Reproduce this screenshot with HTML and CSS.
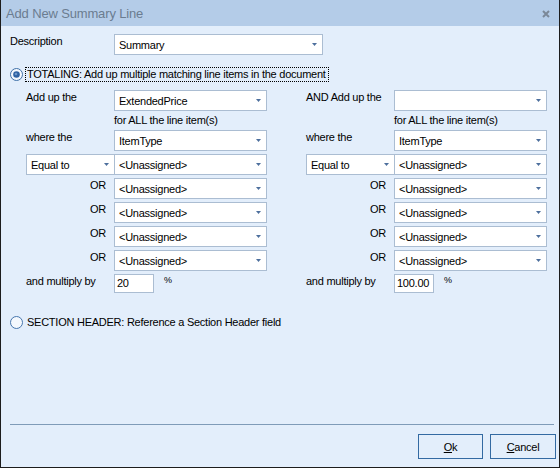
FILE: index.html
```html
<!DOCTYPE html>
<html lang="en">
<head>
<meta charset="UTF-8">
<link rel="stylesheet" href="styles.css">
</head>
<body>
    <div class="window">
        <div class="titlebar">
            <span class="title">Add New Summary Line</span>
            <svg class="close" width="8" height="8" viewBox="0 0 8 8"><path d="M1 1L7 7M7 1L1 7" stroke="#7b8898" stroke-width="2" fill="none"/></svg>
        </div>

        <div class="content">
            <div class="desc-row">
                <span class="label desc-label">Description</span>
                <div class="combo wide"><span class="value">Summary</span><svg class="arrow" width="5" height="3" viewBox="0 0 5 3"><polygon points="0,0 5,0 2.5,3" fill="#4d6f9d"/></svg></div>
            </div>

            <div class="radio-row">
                <svg class="radio" width="13" height="13" viewBox="0 0 13 13">
                    <circle cx="6.5" cy="6.5" r="6" fill="#f4f8fd" stroke="#3f70a8"/>
                    <circle cx="6.5" cy="6.5" r="3.3" fill="#2f62a3"/>
                    <circle cx="6" cy="6" r="1.3" fill="#6d97c9"/>
                </svg>
                <span class="radio-text focused">TOTALING: Add up multiple matching line items in the document</span>
            </div>

            <div class="columns">
                <div class="col">
                    <span class="label">Add up the</span>
                    <div class="combo"><span class="value">ExtendedPrice</span><svg class="arrow" width="5" height="3" viewBox="0 0 5 3"><polygon points="0,0 5,0 2.5,3" fill="#4d6f9d"/></svg></div>
                    <span></span>
                    <span class="note">for ALL the line item(s)</span>
                    <span class="label">where the</span>
                    <div class="combo"><span class="value">ItemType</span><svg class="arrow" width="5" height="3" viewBox="0 0 5 3"><polygon points="0,0 5,0 2.5,3" fill="#4d6f9d"/></svg></div>
                    <div class="combo op"><span class="value">Equal to</span><svg class="arrow" width="5" height="3" viewBox="0 0 5 3"><polygon points="0,0 5,0 2.5,3" fill="#4d6f9d"/></svg></div>
                    <div class="combo"><span class="value">&lt;Unassigned&gt;</span><svg class="arrow" width="5" height="3" viewBox="0 0 5 3"><polygon points="0,0 5,0 2.5,3" fill="#4d6f9d"/></svg></div>
                    <span class="label or">OR</span>
                    <div class="combo"><span class="value">&lt;Unassigned&gt;</span><svg class="arrow" width="5" height="3" viewBox="0 0 5 3"><polygon points="0,0 5,0 2.5,3" fill="#4d6f9d"/></svg></div>
                    <span class="label or">OR</span>
                    <div class="combo"><span class="value">&lt;Unassigned&gt;</span><svg class="arrow" width="5" height="3" viewBox="0 0 5 3"><polygon points="0,0 5,0 2.5,3" fill="#4d6f9d"/></svg></div>
                    <span class="label or">OR</span>
                    <div class="combo"><span class="value">&lt;Unassigned&gt;</span><svg class="arrow" width="5" height="3" viewBox="0 0 5 3"><polygon points="0,0 5,0 2.5,3" fill="#4d6f9d"/></svg></div>
                    <span class="label or">OR</span>
                    <div class="combo"><span class="value">&lt;Unassigned&gt;</span><svg class="arrow" width="5" height="3" viewBox="0 0 5 3"><polygon points="0,0 5,0 2.5,3" fill="#4d6f9d"/></svg></div>
                    <span class="label">and multiply by</span>
                    <div class="factor"><div class="num">20</div><span class="pct">%</span></div>
                </div>

                <div class="col">
                    <span class="label">AND Add up the</span>
                    <div class="combo"><span class="value"></span><svg class="arrow" width="5" height="3" viewBox="0 0 5 3"><polygon points="0,0 5,0 2.5,3" fill="#4d6f9d"/></svg></div>
                    <span></span>
                    <span class="note">for ALL the line item(s)</span>
                    <span class="label">where the</span>
                    <div class="combo"><span class="value">ItemType</span><svg class="arrow" width="5" height="3" viewBox="0 0 5 3"><polygon points="0,0 5,0 2.5,3" fill="#4d6f9d"/></svg></div>
                    <div class="combo op"><span class="value">Equal to</span><svg class="arrow" width="5" height="3" viewBox="0 0 5 3"><polygon points="0,0 5,0 2.5,3" fill="#4d6f9d"/></svg></div>
                    <div class="combo"><span class="value">&lt;Unassigned&gt;</span><svg class="arrow" width="5" height="3" viewBox="0 0 5 3"><polygon points="0,0 5,0 2.5,3" fill="#4d6f9d"/></svg></div>
                    <span class="label or">OR</span>
                    <div class="combo"><span class="value">&lt;Unassigned&gt;</span><svg class="arrow" width="5" height="3" viewBox="0 0 5 3"><polygon points="0,0 5,0 2.5,3" fill="#4d6f9d"/></svg></div>
                    <span class="label or">OR</span>
                    <div class="combo"><span class="value">&lt;Unassigned&gt;</span><svg class="arrow" width="5" height="3" viewBox="0 0 5 3"><polygon points="0,0 5,0 2.5,3" fill="#4d6f9d"/></svg></div>
                    <span class="label or">OR</span>
                    <div class="combo"><span class="value">&lt;Unassigned&gt;</span><svg class="arrow" width="5" height="3" viewBox="0 0 5 3"><polygon points="0,0 5,0 2.5,3" fill="#4d6f9d"/></svg></div>
                    <span class="label or">OR</span>
                    <div class="combo"><span class="value">&lt;Unassigned&gt;</span><svg class="arrow" width="5" height="3" viewBox="0 0 5 3"><polygon points="0,0 5,0 2.5,3" fill="#4d6f9d"/></svg></div>
                    <span class="label">and multiply by</span>
                    <div class="factor"><div class="num">100.00</div><span class="pct">%</span></div>
                </div>
            </div>

            <div class="radio-row section">
                <svg class="radio" width="13" height="13" viewBox="0 0 13 13">
                    <circle cx="6.5" cy="6.5" r="6" fill="#f4f8fd" stroke="#4676ad"/>
                </svg>
                <span class="radio-text">SECTION HEADER: Reference a Section Header field</span>
            </div>
        </div>

        <!-- dialog buttons -->
        <div class="footer">
            <div class="sep"></div>
            <div class="buttons">
                <button class="btn ok"><u>O</u>k</button>
                <button class="btn cancel"><u>C</u>ancel</button>
            </div>
        </div>
    </div>
</body>
</html>
```

FILE: styles.css
```css
body {
    margin: 0;
    background-color: #e3eefb;
    font-family: "Liberation Sans", Arial, sans-serif;
    font-size: 11px;
    letter-spacing: -0.25px;
    color: #000;
}

.window {
    width: 560px;
    height: 468px;
    box-sizing: border-box;
    border: 1px solid #1c1c1c;
    border-top: none;
    background-color: #e3eefb;
    display: flex;
    flex-direction: column;
}

.titlebar {
    height: 26px;
    flex-shrink: 0;
    background-color: #b4cce8;
    display: flex;
    align-items: center;
    padding: 0 9px 0 5px;
}

.title {
    flex: 1;
    font-size: 13px;
    letter-spacing: -0.15px;
    color: #6b7c90;
    line-height: 26px;
    padding-top: 2px;
}

.close {
    display: block;
    margin-top: 1px;
}

.content {
    flex: 1;
    padding: 8px 0 0 9px;
}

.label {
    line-height: 14px;
    white-space: nowrap;
}

.desc-row {
    display: flex;
}

.desc-label {
    width: 104px;
}

/* combo boxes */
.combo {
    box-sizing: border-box;
    height: 21px;
    width: 153px;
    background-color: #fff;
    border: 1px solid #abbdd2;
    padding: 1px 5px 0 4px;
    display: flex;
    align-items: center;
    line-height: 18px;
    white-space: nowrap;
}

.combo.wide {
    width: 209px;
}

.combo.op {
    width: 89px;
    margin-right: -1px;
}

.combo .value {
    flex: 1;
    overflow: hidden;
}

.arrow {
    display: block;
    flex-shrink: 0;
    margin-top: -1px;
}

/* radio options */
.radio-row {
    display: flex;
    align-items: center;
    height: 17px;
    margin-top: 11px;
}

.radio-row.section {
    margin-top: 21px;
}

.radio {
    display: block;
    flex-shrink: 0;
}

.radio-text {
    margin-left: 2px;
    padding: 0 2px 0 1px;
    line-height: 13px;
    border: 1px solid transparent;
}

.radio-text.focused {
    border: 1px dotted #000;
}

.columns {
    display: grid;
    grid-template-columns: 241px 241px;
    column-gap: 39px;
    margin-top: 7px;
    padding-left: 16px;
}

.col {
    display: grid;
    grid-template-columns: 88px 153px;
    row-gap: 3px;
}

.note {
    line-height: 13px;
}

.label.or {
    text-align: right;
    padding-right: 8px;
}

.factor {
    display: flex;
    align-items: flex-start;
}

.num {
    box-sizing: border-box;
    width: 40px;
    height: 19px;
    background-color: #fff;
    border: 1px solid #abbdd2;
    padding-left: 2px;
    line-height: 17px;
}

.pct {
    font-size: 9px;
    line-height: 12px;
    margin-left: 10px;
}

/* footer with buttons */
.footer {
    flex-shrink: 0;
}

.sep {
    margin: 0 5px 0 9px;
    border-top: 1px solid #7f9bb8;
}

.buttons {
    display: flex;
    justify-content: flex-end;
    gap: 7px;
    margin-top: 9px;
    padding: 0 3px 8px 0;
}

.btn {
    height: 25px;
    box-sizing: border-box;
    border: 1px solid #336aa2;
    background-color: #e3eefb;
    font-family: "Liberation Sans", Arial, sans-serif;
    font-size: 11px;
    letter-spacing: -0.25px;
    color: #000;
    padding: 0;
}

.btn.ok {
    width: 65px;
}

.btn.cancel {
    width: 66px;
}
```
